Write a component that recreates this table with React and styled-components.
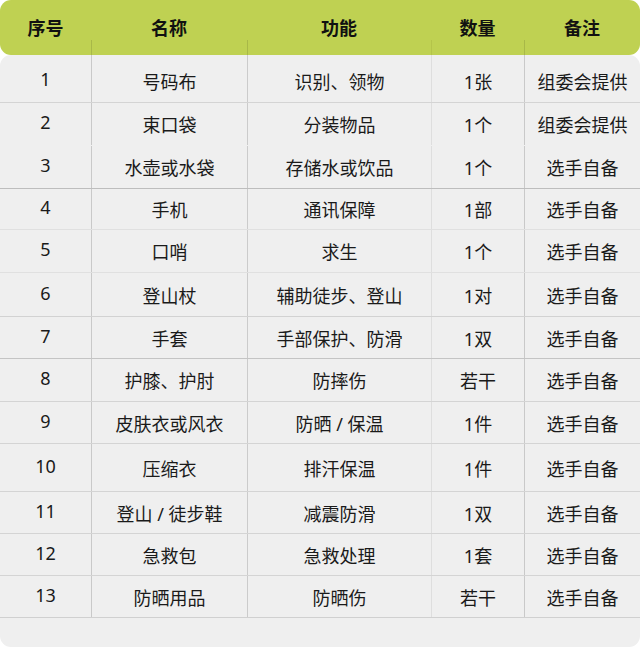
import React from 'react';
import styled, { createGlobalStyle, css } from 'styled-components';

const GlobalStyle = createGlobalStyle`
    html, body {
        margin: 0;
        padding: 0;
        background: #ffffff;
    }

    body {
        font-family: "Noto Sans", "Noto Sans CJK SC", sans-serif;
        color: #1a1a1a;
    }
`;

const COLUMNS = '91px 156px 184px 93px 1fr';

const Wrapper = styled.div`
    width: 640px;
    height: 647px;
    display: flex;
    flex-direction: column;
`;

const Header = styled.div`
    display: grid;
    grid-template-columns: ${COLUMNS};
    height: 55px;
    background-color: #bfd152;
    border-radius: 11px;
`;

const HeaderCell = styled.div`
    position: relative;
    display: flex;
    align-items: center;
    justify-content: center;
    padding-bottom: 1px;
    font-size: 18px;
    font-weight: 700;
    color: #111111;

    ${({ divided }) => divided && css`
        &::before {
            content: '';
            position: absolute;
            left: 0;
            top: 40px;
            bottom: 0;
            width: 1px;
            background-color: ${({ lineColor }) => lineColor};
        }
    `};
`;

const Body = styled.div`
    flex: 1;
    background-color: #efefef;
    border-radius: 11px;
`;

const Row = styled.div`
    display: grid;
    grid-template-columns: ${COLUMNS};
    height: ${({ height }) => height}px;
    box-sizing: border-box;
    border-bottom: 1px solid ${({ line }) => line};

    ${({ first }) => first && css`
        & > div {
            padding-top: 5px;
        }
    `};
`;

const Cell = styled.div`
    display: flex;
    align-items: center;
    justify-content: center;
    font-size: 18px;
    white-space: nowrap;
    ${({ lineColor }) => lineColor && css`
        border-left: 1px solid ${lineColor};
    `};
`;

const NumberCell = styled(Cell)`
    padding-bottom: 4px;
`;

const lines = ['transparent', '#c9c9c9', '#cbcbcb', '#dedede', '#c9c9c9'];

const headers = ['序号', '名称', '功能', '数量', '备注'];

const items = [
    ['1', '号码布', '识别、领物', '1张', '组委会提供', 48, '#d4d4d4'],
    ['2', '束口袋', '分装物品', '1个', '组委会提供', 43, 'transparent'],
    ['3', '水壶或水袋', '存储水或饮品', '1个', '选手自备', 43, '#bdbdbd'],
    ['4', '手机', '通讯保障', '1部', '选手自备', 41, '#e0e0e0'],
    ['5', '口哨', '求生', '1个', '选手自备', 43, '#e0e0e0'],
    ['6', '登山杖', '辅助徒步、登山', '1对', '选手自备', 44, '#d2d2d2'],
    ['7', '手套', '手部保护、防滑', '1双', '选手自备', 42, '#c4c4c4'],
    ['8', '护膝、护肘', '防摔伤', '若干', '选手自备', 43, '#d4d4d4'],
    ['9', '皮肤衣或风衣', '防晒 / 保温', '1件', '选手自备', 42, '#d4d4d4'],
    ['10', '压缩衣', '排汗保温', '1件', '选手自备', 48, '#d4d4d4'],
    ['11', '登山 / 徒步鞋', '减震防滑', '1双', '选手自备', 42, '#d4d4d4'],
    ['12', '急救包', '急救处理', '1套', '选手自备', 42, '#d4d4d4'],
    ['13', '防晒用品', '防晒伤', '若干', '选手自备', 42, '#d0d0d0'],
];

const App = () => (
    <>
        <GlobalStyle />
        <Wrapper>
            <Header>
                {headers.map((title, i) =>
                    <HeaderCell key={title} divided={i > 0} lineColor={i === 3 ? '#b4c44a' : '#a8b848'}>
                        {title}
                    </HeaderCell>
                )}
            </Header>
            <Body>
                {items.map(([no, name, use, amount, note, height, line], i) =>
                    <Row key={no} height={height} line={line} first={i === 0}>
                        <NumberCell>{no}</NumberCell>
                        <Cell lineColor={lines[1]}>{name}</Cell>
                        <Cell lineColor={lines[2]}>{use}</Cell>
                        <Cell lineColor={lines[3]}>{amount}</Cell>
                        <Cell lineColor={lines[4]}>{note}</Cell>
                    </Row>
                )}
            </Body>
        </Wrapper>
    </>
);

export default App;
